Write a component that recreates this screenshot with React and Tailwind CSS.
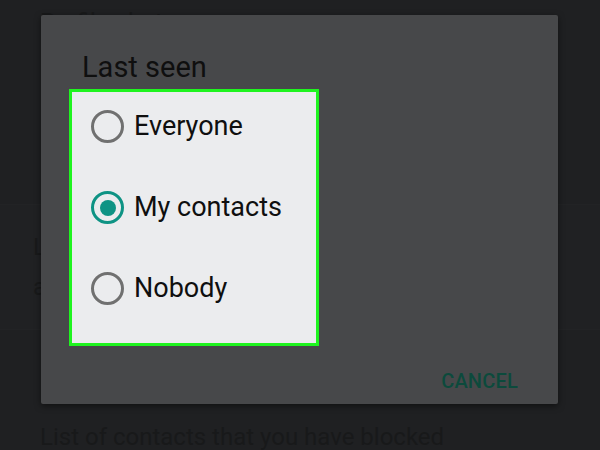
import { useState } from 'react';

const options = ['Everyone', 'My contacts', 'Nobody'];

const Radio = ({ checked }) => (
  <span
    className={`flex h-[33px] w-[33px] shrink-0 items-center justify-center rounded-full border-[3.5px] ${
      checked ? 'border-[#0e9384]' : 'border-[#707070]'
    }`}
  >
    {checked && <span className="h-[16px] w-[16px] rounded-full bg-[#0e9384]" />}
  </span>
);

const App = () => {
  const [selected, setSelected] = useState('My contacts');

  return (
    <div className="relative h-[450px] w-[600px] overflow-hidden bg-[#1f2022] font-['Roboto','Liberation_Sans',sans-serif]">
      {/* page behind the dialog */}
      <div className="flex flex-col text-[#18191a]">
        <p className="px-[40px] pt-[4px] text-[24px]">Profile photo</p>
        <div className="mt-[164px] border-y border-[#222325] bg-[#202123] px-[33px] py-[22px] text-[24px] leading-[40px]">
          <p>Last seen</p>
          <p>a</p>
        </div>
        <p className="mt-[92px] px-[40px] text-[24px] leading-[30px]">List of contacts that you have blocked</p>
      </div>

      {/* dialog */}
      <div className="absolute left-[41px] top-[15px] flex h-[389px] w-[517px] flex-col rounded-[2px] bg-[#47484a] shadow-[0_2px_6px_rgba(0,0,0,0.5)]">
        <h2 className="ml-[41px] mt-[34px] text-[29px] leading-[36px] text-[#0f0f0f]">Last seen</h2>
        <div className="ml-[28px] mt-[4px] flex h-[257px] w-[250px] flex-col border-[3px] border-[#1ff41f] bg-[#ebecee] pt-[18px]">
          {options.map((opt) => (
            <button
              key={opt}
              onClick={() => setSelected(opt)}
              className="flex h-[81px] shrink-0 items-start gap-[10px] pl-[19px] text-left"
            >
              <Radio checked={selected === opt} />
              <span className="text-[27px] leading-[33px] text-[#0f0f0f]">{opt}</span>
            </button>
          ))}
        </div>
        <div className="mr-[40px] mt-[20px] flex justify-end">
          <button className="text-[20px] font-medium tracking-[0.2px] text-[#0c4a3c]">CANCEL</button>
        </div>
      </div>
    </div>
  );
};

export default App;
